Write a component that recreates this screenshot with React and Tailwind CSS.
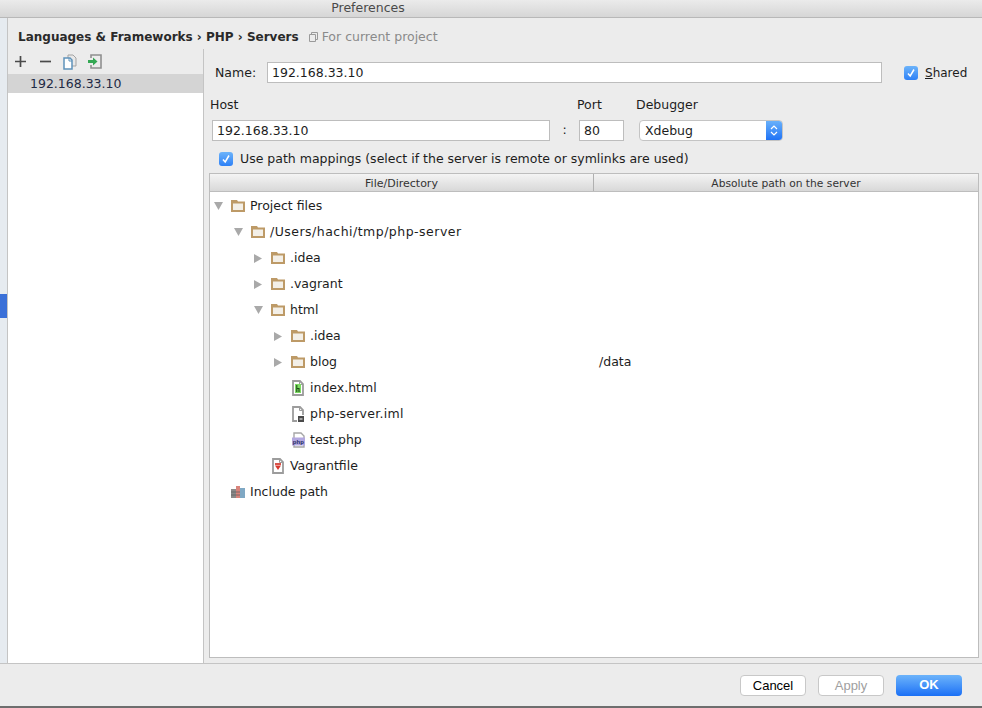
const font = 'font-["DejaVu_Sans",sans-serif]';

function Folder() {
  return (
    <svg width="14" height="12" viewBox="0 0 14 12" className="shrink-0">
      <path d="M0 0H6L7 1.5H14V12H0Z" fill="#bd9a67" />
      <rect x="2" y="3.5" width="10" height="6.5" fill="#f3efe7" />
    </svg>
  );
}

function DocOutline({ children }) {
  return (
    <svg width="12" height="16" viewBox="0 0 12 16" className="ml-[1px] shrink-0">
      <path d="M1 1H8L11 4V15H1Z" fill="#fff" stroke="#9c9c9c" strokeWidth="1.8" />
      <path d="M7.5 1V4.5H11" fill="none" stroke="#9c9c9c" />
      {children}
    </svg>
  );
}

function HtmlIcon() {
  return (
    <DocOutline>
      <rect x="3" y="4" width="6" height="9" fill="#7ddc62" />
      <path d="M4.8 5V12M4.8 8.5H7V12" fill="none" stroke="#1c4a17" strokeWidth="1.1" />
    </DocOutline>
  );
}

function ImlIcon() {
  return (
    <DocOutline>
      <rect x="5" y="9" width="7" height="7" fill="#fff" />
      <rect x="6" y="10" width="6" height="6" fill="#4a4a4a" />
      <rect x="7.5" y="12.5" width="3" height="1" fill="#fff" />
    </DocOutline>
  );
}

function PhpIcon() {
  return (
    <svg width="14" height="16" viewBox="0 0 14 16" className="ml-[1px] shrink-0">
      <path d="M2 1H9L12 4V15H2Z" fill="#fff" stroke="#a6a6a6" strokeWidth="1.4" />
      <rect x="0" y="5.5" width="13" height="8" fill="#b3a8e0" />
      <text x="0.8" y="11.6" fontSize="6" fontWeight="700" fill="#222a60" fontFamily="Liberation Sans, sans-serif">php</text>
    </svg>
  );
}

function VagrantIcon() {
  return (
    <DocOutline>
      <rect x="3" y="5" width="6" height="2" fill="#d9534a" />
      <path d="M3 7.5H9L6 12Z" fill="#d8382e" />
    </DocOutline>
  );
}

function LibraryIcon() {
  return (
    <svg width="14" height="12" viewBox="0 0 14 12" className="shrink-0">
      <rect x="0" y="3" width="5" height="9" fill="#8a8a8a" />
      <rect x="5" y="0" width="4" height="12" fill="#d9847c" />
      <rect x="9" y="2" width="5" height="10" fill="#7fa8c4" />
      <path d="M0 6H9M0 9H9" stroke="#5f5f5f" strokeWidth="0.8" />
    </svg>
  );
}

function Arrow({ open }) {
  if (open) {
    return (
      <svg width="9" height="8" viewBox="0 0 9 8" className="shrink-0">
        <path d="M0 0H9L4.5 8Z" fill="#a9a9a9" />
      </svg>
    );
  }
  return (
    <svg width="8" height="9" viewBox="0 0 8 9" className="shrink-0">
      <path d="M0 0V9L8 4.5Z" fill="#a9a9a9" />
    </svg>
  );
}

function Check() {
  return (
    <span className="flex h-[14px] w-[14px] shrink-0 items-center justify-center rounded-[3px] bg-gradient-to-b from-[#6cb3fa] to-[#2d80f6]">
      <svg width="10" height="10" viewBox="0 0 10 10">
        <path d="M2 5.5L4.2 8L8 1.5" fill="none" stroke="#fff" strokeWidth="1.5" />
      </svg>
    </span>
  );
}

const rows = [
  { pad: 'pl-[4px]', arrow: 'open', icon: <Folder />, label: 'Project files' },
  { pad: 'pl-[24px]', arrow: 'open', icon: <Folder />, label: '/Users/hachi/tmp/php-server', text: 'tracking-[0.48px]' },
  { pad: 'pl-[44px]', arrow: 'closed', icon: <Folder />, label: '.idea' },
  { pad: 'pl-[44px]', arrow: 'closed', icon: <Folder />, label: '.vagrant' },
  { pad: 'pl-[44px]', arrow: 'open', icon: <Folder />, label: 'html' },
  { pad: 'pl-[64px]', arrow: 'closed', icon: <Folder />, label: '.idea' },
  { pad: 'pl-[64px]', arrow: 'closed', icon: <Folder />, label: 'blog', path: '/data' },
  { pad: 'pl-[64px]', icon: <HtmlIcon />, label: 'index.html' },
  { pad: 'pl-[64px]', icon: <ImlIcon />, label: 'php-server.iml', text: 'tracking-[0.28px]' },
  { pad: 'pl-[64px]', icon: <PhpIcon />, label: 'test.php' },
  { pad: 'pl-[44px]', icon: <VagrantIcon />, label: 'Vagrantfile' },
  { pad: 'pl-[4px]', icon: <LibraryIcon />, label: 'Include path' },
];

function TreeRow({ row }) {
  return (
    <div className="flex h-[26px] items-center">
      <div className={`flex w-[384px] items-center ${row.pad}`}>
        <span className="flex w-[17px] shrink-0 items-center">
          {row.arrow && <Arrow open={row.arrow === 'open'} />}
        </span>
        <span className="flex w-[19px] shrink-0 items-center">{row.icon}</span>
        <span className={row.text}>{row.label}</span>
      </div>
      {row.path && <span className="pl-[5px]">{row.path}</span>}
    </div>
  );
}

export default function App() {
  return (
    <div className={`flex h-[708px] w-[982px] flex-col overflow-hidden bg-[#ececec] text-[12.5px] text-[#1d1d1d] ${font}`}>
      <div className="flex h-[18px] shrink-0 justify-center border-b border-[#b8b8b8] bg-gradient-to-b from-[#ebebeb] to-[#d6d6d6] pr-[246px] text-[12.5px] leading-[15px] text-[#4a4a4a]">
        Preferences
      </div>
      <div className="flex min-h-0 flex-1">
        <div className="w-[8px] shrink-0 border-r border-[#c4c4c4] bg-[#e6ebf0] pt-[276px]">
          <div className="h-[24px] bg-[#3a70d8]" />
        </div>
        <div className="flex min-w-0 flex-1 flex-col">
          <div className="flex h-[31px] shrink-0 items-center pl-[10px] pt-[6px]">
            <span className="text-[12px] font-bold text-[#2a2a2a]">Languages &amp; Frameworks › PHP › Servers</span>
            <span className="ml-[10px] flex items-center gap-[4px] pt-[1px] text-[#8a8a8a]">
              <svg width="9" height="10" viewBox="0 0 9 10">
                <path d="M0.5 2.5H6.5V9.5H0.5Z M2.5 2.5V0.5H8.5V7.5H6.5" fill="none" stroke="#9a9a9a" />
              </svg>
              For current project
            </span>
          </div>
          <div className="flex min-h-0 flex-1">
            <div className="flex w-[196px] shrink-0 flex-col border-r border-[#c4c4c4]">
              <div className="flex h-[25px] shrink-0 items-center pl-[7px]">
                <svg width="11" height="11" viewBox="0 0 11 11">
                  <path d="M5.5 0V11M0 5.5H11" stroke="#4a4a4a" strokeWidth="1.7" />
                </svg>
                <svg width="11" height="11" viewBox="0 0 11 11" className="ml-[14px]">
                  <path d="M0 5.5H11" stroke="#4a4a4a" strokeWidth="1.7" />
                </svg>
                <svg width="14" height="16" viewBox="0 0 14 16" className="ml-[12px]">
                  <path d="M5 1H10L13 4V12H5Z" fill="#e8e8e8" stroke="#a3a3a3" />
                  <path d="M1 4H7L9 6V15H1Z" fill="#fff" stroke="#5f93ba" strokeWidth="1.5" />
                  <path d="M6 4V7H9" fill="none" stroke="#5f93ba" />
                </svg>
                <svg width="14" height="15" viewBox="0 0 14 15" className="ml-[11px]">
                  <path d="M3 4V1H13V14H3V11" fill="none" stroke="#8f8f8f" strokeWidth="1.6" />
                  <path d="M0 6H5V3.5L9.5 7.5L5 11.5V9H0Z" fill="#34a853" />
                </svg>
              </div>
              <div className="flex h-[19px] shrink-0 items-center bg-[#d4d4d4] pl-[22px] pt-[1px] text-[#1f2a44]">192.168.33.10</div>
              <div className="flex-1 bg-white" />
            </div>
            <div className="flex min-w-0 flex-1 flex-col pl-[5px] pr-[3px]">
              <div className="flex h-[34px] shrink-0 items-start pt-[13px]">
                <label className="ml-[6px] w-[52px] leading-[21px]">Name:</label>
                <div className="flex h-[21px] w-[615px] items-center border border-[#bdbdbd] bg-white pl-[4px] pt-[1px]">192.168.33.10</div>
                <span className="ml-[22px] flex h-[21px] items-center gap-[7px]">
                  <Check />
                  <span className="pt-[1px] text-[12px]"><u>S</u>hared</span>
                </span>
              </div>
              <div className="flex h-[28px] shrink-0 items-end pl-[1px] leading-[13px]">
                <span className="w-[367px]">Host</span>
                <span className="w-[59px]">Port</span>
                <span>Debugger</span>
              </div>
              <div className="flex h-[37px] shrink-0 items-start pl-[3px] pt-[9px]">
                <div className="flex h-[21px] w-[338px] items-center border border-[#bdbdbd] bg-white pl-[4px] pt-[1px]">192.168.33.10</div>
                <span className="flex h-[21px] w-[29px] items-center justify-center">:</span>
                <div className="flex h-[21px] w-[45px] items-center border border-[#bdbdbd] bg-white pl-[4px] pt-[1px]">80</div>
                <div className="ml-[15px] flex h-[21px] w-[144px] items-center justify-between overflow-hidden rounded-[4px] border border-[#c4c4c4] bg-white pl-[5px]">
                  <span className="pt-[1px]">Xdebug</span>
                  <span className="flex h-[21px] w-[16px] items-center justify-center bg-gradient-to-b from-[#6cb3fa] to-[#1a6ff5]">
                    <svg width="8" height="13" viewBox="0 0 8 13">
                      <path d="M1 5L4 2L7 5M1 8L4 11L7 8" fill="none" stroke="#fff" strokeWidth="1.2" />
                    </svg>
                  </span>
                </div>
              </div>
              <div className="flex h-[21px] shrink-0 items-center gap-[7px] pl-[10px]">
                <Check />
                <span className="pt-[1px]">Use path mappings (select if the server is remote or symlinks are used)</span>
              </div>
              <div className="mt-[4px] flex h-[485px] w-[770px] flex-col border border-[#bdbdbd] bg-white">
                <div className="flex h-[18px] shrink-0 border-b border-[#bdbdbd] bg-gradient-to-b from-[#f4f4f4] to-[#d8d8d8] text-[11px] leading-[19px] text-[#333]">
                  <div className="w-[384px] border-r border-[#b0b0b0] text-center">File/Directory</div>
                  <div className="flex-1 text-center text-[10.7px]">Absolute path on the server</div>
                </div>
                <div className="pt-[1px]">
                  {rows.map((row, i) => (
                    <TreeRow key={i} row={row} />
                  ))}
                </div>
              </div>
            </div>
          </div>
        </div>
      </div>
      <div className="flex h-[45px] shrink-0 items-center justify-end gap-[12px] border-t border-[#c4c4c4] border-b-2 border-b-[#6e6e6e] pr-[20px] font-['Liberation_Sans',sans-serif] text-[13px]">
        <button className="h-[21px] w-[66px] rounded-[4px] border border-[#c8c8c8] bg-white text-black">Cancel</button>
        <button className="h-[21px] w-[66px] rounded-[4px] border border-[#c8c8c8] bg-white text-[#a0a0a0]">Apply</button>
        <button className="h-[21px] w-[66px] rounded-[4px] bg-gradient-to-b from-[#6cb3fa] to-[#1a6ff5] font-bold text-white">OK</button>
      </div>
    </div>
  );
}
